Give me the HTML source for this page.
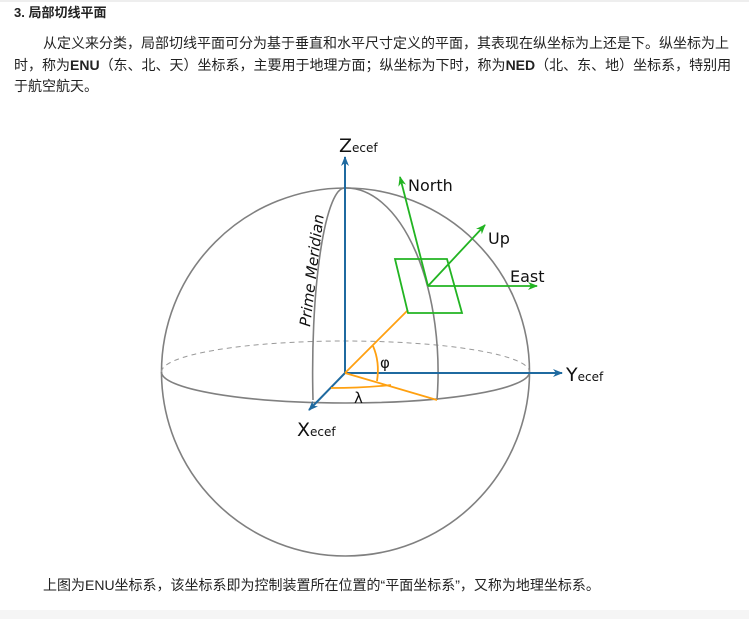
<!DOCTYPE html>
<html><head><meta charset="utf-8"><style>
html,body{margin:0;padding:0;width:749px;height:619px;overflow:hidden;background:#fff;font-family:"Liberation Sans","Noto Sans CJK SC",sans-serif;color:#222;}
.top{position:absolute;left:0;top:0;width:749px;height:2px;background:#eee;}
.h{position:absolute;left:14px;top:4px;font-size:13px;font-weight:bold;line-height:18px;}
.p{position:absolute;left:14px;top:33px;width:730px;font-size:14px;line-height:21.7px;text-indent:29px;}
.c{position:absolute;left:43px;top:575px;font-size:14px;line-height:20px;}
.bot{position:absolute;left:0;top:610px;width:749px;height:9px;background:#f5f5f5;}
svg{position:absolute;left:0;top:0;}
</style></head><body>
<div class="top"></div>
<div class="h">3. 局部切线平面</div>
<div class="p">从定义来分类，局部切线平面可分为基于垂直和水平尺寸定义的平面，其表现在纵坐标为上还是下。纵坐标为上时，称为<b>ENU</b>（东、北、天）坐标系，主要用于地理方面；纵坐标为下时，称为<b>NED</b>（北、东、地）坐标系，特别用于航空航天。</div>
<svg width="749" height="619" viewBox="0 0 749 619" font-family="DejaVu Sans, Liberation Sans, sans-serif">
<defs>
<marker id="ab" markerWidth="10" markerHeight="8" refX="9" refY="4" orient="auto" markerUnits="userSpaceOnUse"><path d="M0,0 L10,4 L0,8 L3,4 z" fill="#1f6aa0"/></marker>
<marker id="ag" markerWidth="10" markerHeight="8" refX="9" refY="4" orient="auto" markerUnits="userSpaceOnUse"><path d="M0,0 L10,4 L0,8 L3,4 z" fill="#22b422"/></marker>
</defs>
<g fill="none" stroke="#808080" stroke-width="1.6">
<circle cx="345.5" cy="372" r="184"/>
<path d="M161.5,372 A184,31 0 0 0 529.5,372"/>
<path d="M161.5,372 A184,31 0 0 1 529.5,372" stroke-dasharray="5,4" stroke-width="1" stroke="#999"/>
<path d="M345,188 A32,184 0 0 0 313,400"/>
<path d="M345,188 A92,184 0 0 1 437,400"/>
</g>
<g stroke="#1f6aa0" stroke-width="2" fill="none">
<line x1="345" y1="373" x2="345" y2="157" marker-end="url(#ab)"/>
<line x1="345" y1="373" x2="562" y2="373" marker-end="url(#ab)"/>
<line x1="345" y1="373" x2="309" y2="410" marker-end="url(#ab)"/>
</g>
<g stroke="#ffa010" stroke-width="1.8" fill="none">
<line x1="345" y1="373" x2="408" y2="310"/>
<line x1="345" y1="373" x2="437" y2="400"/>
<path d="M373,346 Q380,362 377,381"/>
<path d="M331,388 Q362,388 391,385"/>
</g>
<g stroke="#22b422" stroke-width="1.8" fill="none">
<path d="M395,259 L447,259 L462,313 L408,313 Z"/>
<line x1="428" y1="286" x2="400" y2="177" marker-end="url(#ag)"/>
<line x1="428" y1="286" x2="485" y2="225" marker-end="url(#ag)"/>
<line x1="428" y1="286" x2="537" y2="286" marker-end="url(#ag)"/>
</g>
<g fill="#111">
<text x="339" y="152" font-size="19">Z<tspan font-size="12">ecef</tspan></text>
<text x="566" y="381" font-size="19">Y<tspan font-size="12">ecef</tspan></text>
<text x="297" y="436" font-size="19">X<tspan font-size="12">ecef</tspan></text>
<text x="408" y="191" font-size="16">North</text>
<text x="488" y="244" font-size="16">Up</text>
<text x="510" y="282" font-size="16">East</text>
<text x="380" y="368" font-size="15">φ</text>
<text x="354" y="403" font-size="15">λ</text>
<text transform="translate(310,327) rotate(-83)" font-size="15" font-style="italic">Prime Meridian</text>
</g>
</svg>
<div class="c">上图为ENU坐标系，该坐标系即为控制装置所在位置的“平面坐标系”，又称为地理坐标系。</div>
<div class="bot"></div>
</body></html>
